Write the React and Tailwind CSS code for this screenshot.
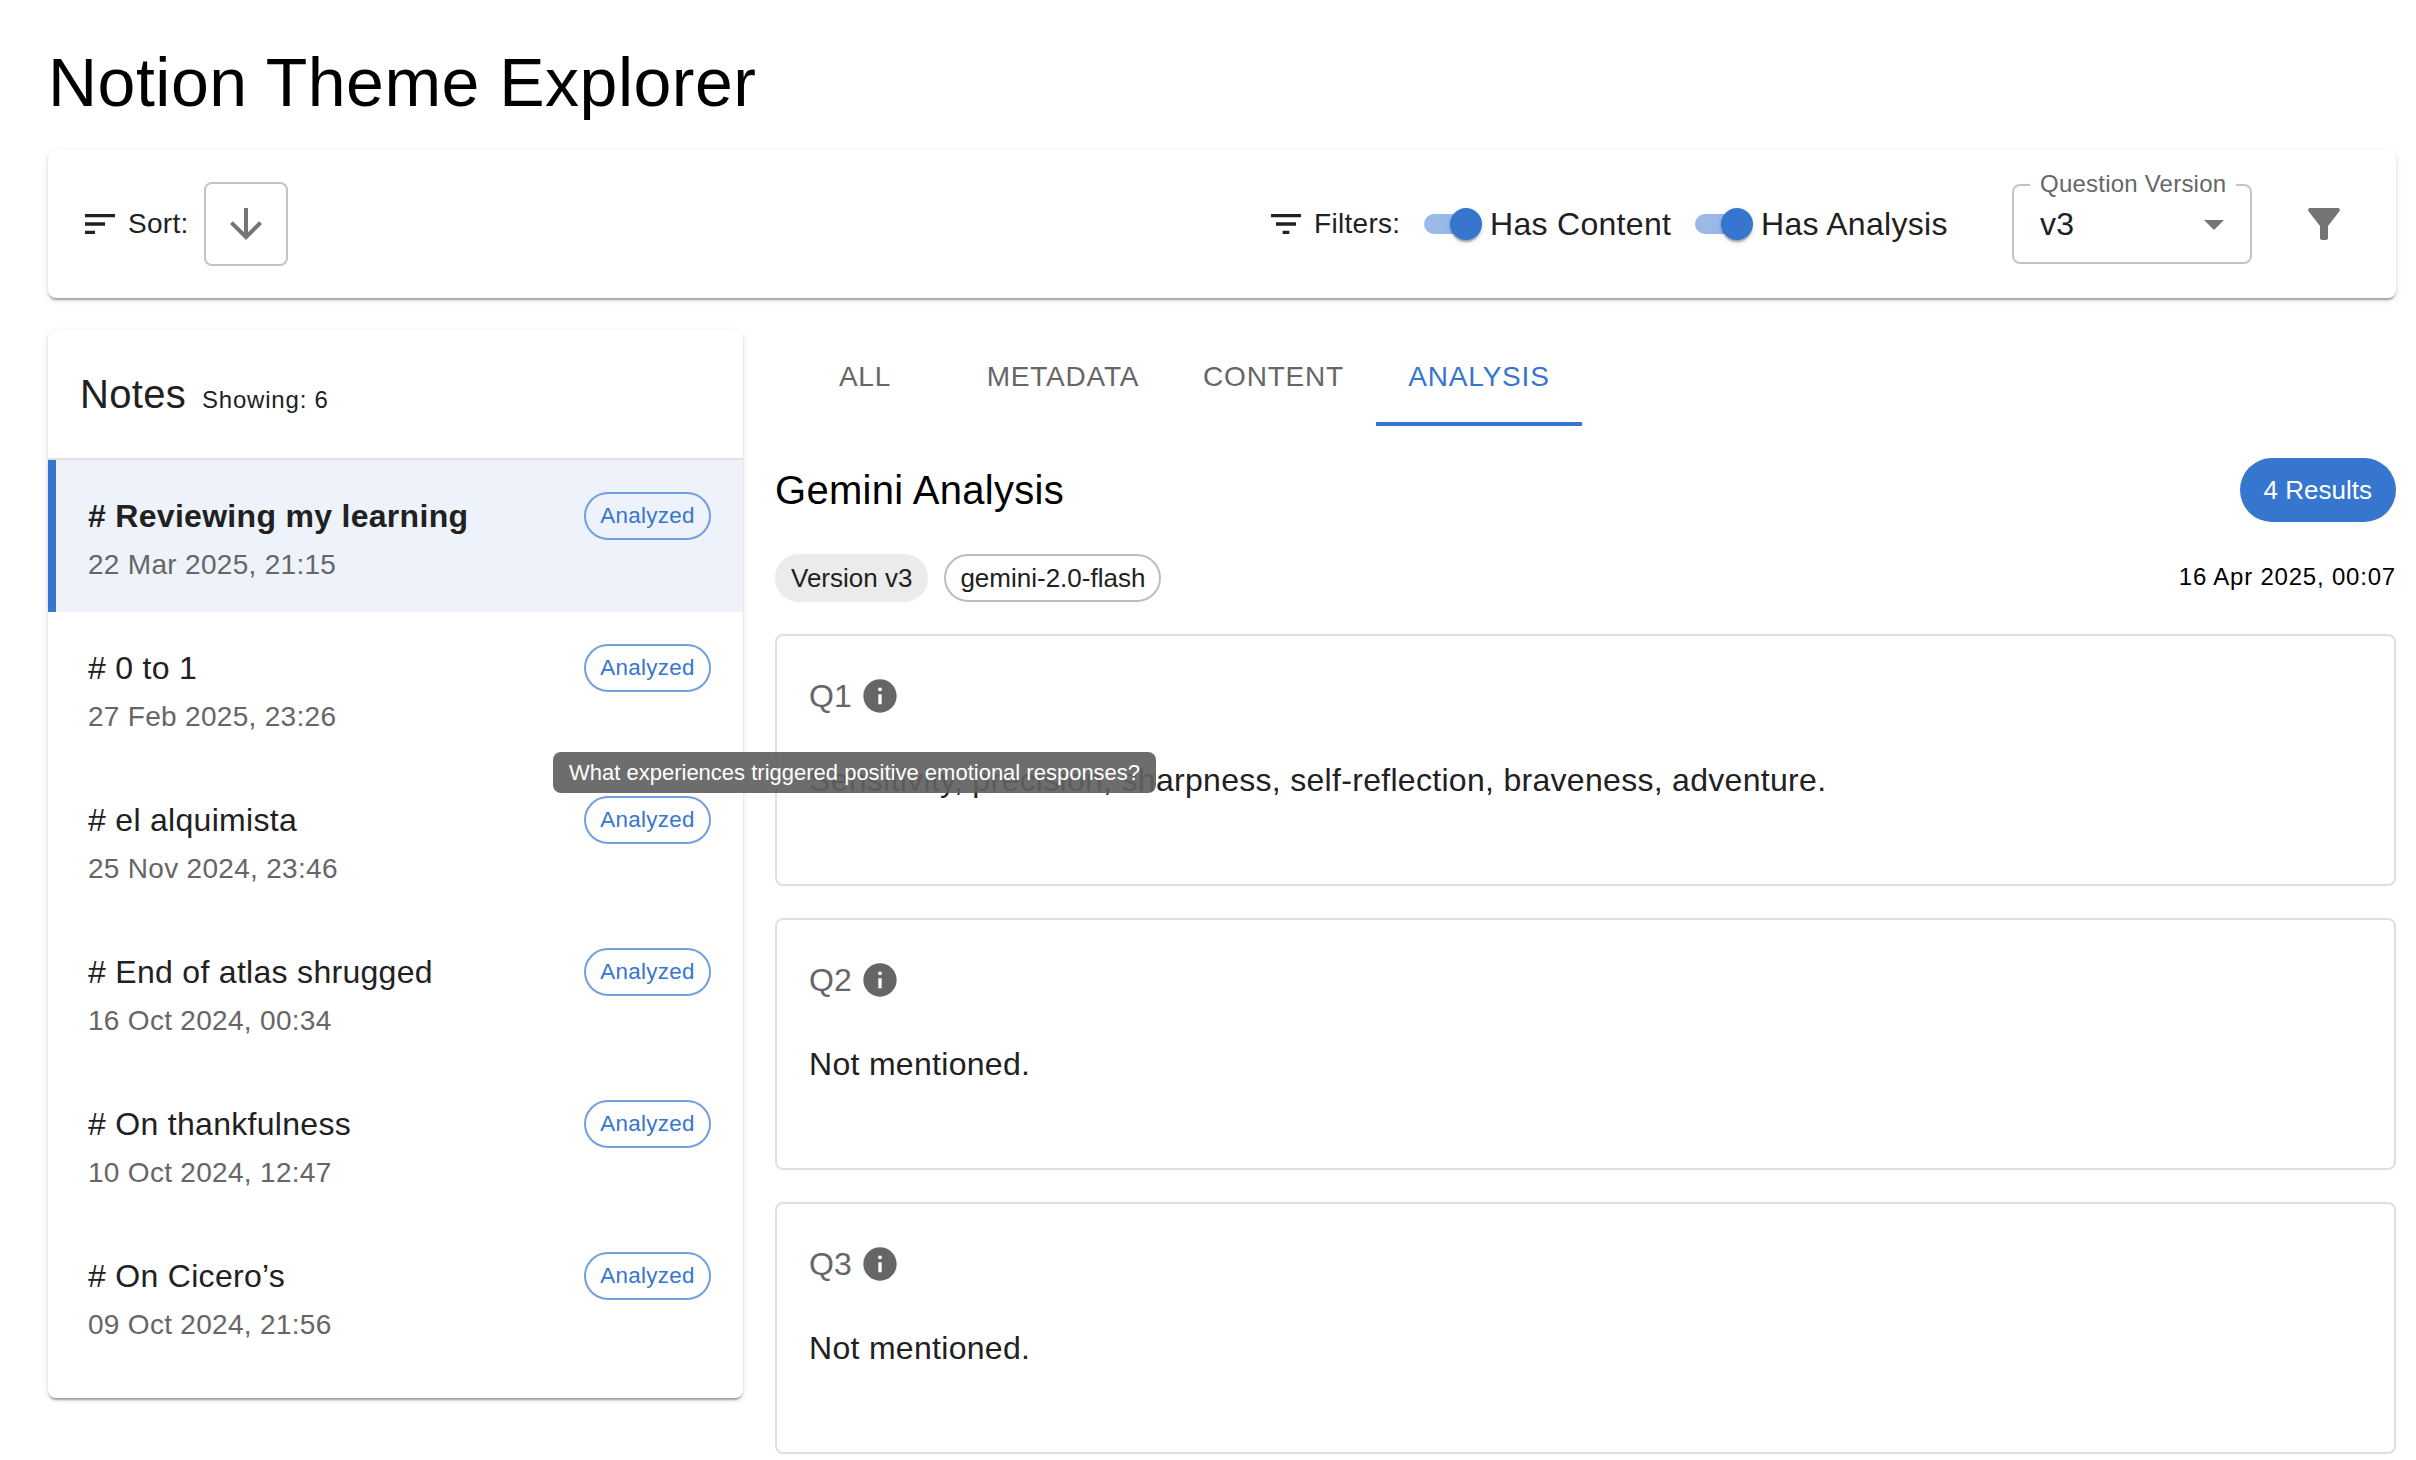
const ICONS = {
  sort: 'M3 18h6v-2H3v2zM3 6v2h18V6H3zm0 7h12v-2H3v2z',
  filterList: 'M10 18h4v-2h-4v2zM3 6v2h18V6H3zm3 7h12v-2H6v2z',
  arrowDown: 'm20 12-1.41-1.41L13 16.17V4h-2v12.17l-5.58-5.59L4 12l8 8 8-8z',
  dropDown: 'M7 10l5 5 5-5z',
  funnel:
    'M4.25 5.61C6.27 8.2 10 13 10 13v6c0 .55.45 1 1 1h2c.55 0 1-.45 1-1v-6s3.72-4.8 5.74-7.39c.51-.66.04-1.61-.79-1.61H5.04c-.83 0-1.3.95-.79 1.61z',
  info: 'M12 2C6.48 2 2 6.48 2 12s4.48 10 10 10 10-4.48 10-10S17.52 2 12 2zm1 15h-2v-6h2v6zm0-8h-2V7h2v2z',
};

function Icon({ name, className }) {
  return (
    <svg viewBox="0 0 24 24" fill="currentColor" className={`block shrink-0 ${className}`}>
      <path d={ICONS[name]} />
    </svg>
  );
}

const PAPER =
  'rounded-lg bg-white text-[#212121] shadow-[0_4px_2px_-2px_rgba(0,0,0,0.2),0_2px_2px_0_rgba(0,0,0,0.14),0_2px_6px_0_rgba(0,0,0,0.12)]';

function Toggle({ label, className }) {
  return (
    <label className={`flex items-center ${className}`}>
      <span className="flex h-5 w-[52px] shrink-0 items-center justify-end rounded-full bg-[#9bb9e6]">
        <span className="-mr-1.5 size-8 shrink-0 rounded-full bg-[#3676ce] shadow-[0_4px_2px_-2px_rgba(0,0,0,0.2),0_2px_2px_0_rgba(0,0,0,0.14),0_2px_6px_0_rgba(0,0,0,0.12)]" />
      </span>
      <span className="ml-[14px] text-[32px] leading-12 tracking-[0.3px] whitespace-nowrap">{label}</span>
    </label>
  );
}

function Toolbar() {
  return (
    <div className={`mt-[26px] flex h-37 items-center pr-12 pl-8 ${PAPER}`}>
      <Icon name="sort" className="size-10" />
      <span className="ml-2 text-[28px] leading-10 tracking-[0.3px]">Sort:</span>
      <button className="ml-[15px] flex size-[84px] items-center justify-center rounded-lg border-2 border-[#c4c4c4] text-[#757575]">
        <Icon name="arrowDown" className="size-12" />
      </button>
      <div className="ml-auto flex items-center">
        <Icon name="filterList" className="size-10" />
        <span className="ml-2 w-[86px] text-[28px] leading-10 tracking-[0.3px]">Filters:</span>
        <Toggle label="Has Content" className="ml-6 w-[271px]" />
        <Toggle label="Has Analysis" className="w-[317px]" />
        <div className="relative flex h-20 w-60 items-center justify-between rounded-lg border-2 border-[#c4c4c4] pr-3 pl-[26px]">
          <span className="absolute -top-4 left-4 bg-white px-2.5 text-[24px] leading-7 tracking-[0.22px] whitespace-nowrap text-[#666]">
            Question Version
          </span>
          <span className="text-[32px] leading-12 tracking-[0.3px]">v3</span>
          <Icon name="dropDown" className="size-12 text-[#757575]" />
        </div>
        <Icon name="funnel" className="ml-12 size-12 text-[#757575]" />
      </div>
    </div>
  );
}

const NOTES = [
  { title: '# Reviewing my learning', date: '22 Mar 2025, 21:15', selected: true },
  { title: '# 0 to 1', date: '27 Feb 2025, 23:26' },
  { title: '# el alquimista', date: '25 Nov 2024, 23:46' },
  { title: '# End of atlas shrugged', date: '16 Oct 2024, 00:34' },
  { title: '# On thankfulness', date: '10 Oct 2024, 12:47' },
  { title: '# On Cicero’s', date: '09 Oct 2024, 21:56' },
];

function NotesPanel() {
  return (
    <aside className={`h-[1068px] w-[695px] shrink-0 ${PAPER}`}>
      <header className="flex h-[130px] items-center border-b-2 border-[#e0e0e0] px-8">
        <div className="flex items-baseline">
          <h2 className="text-[40px] leading-16 tracking-[0.3px]">Notes</h2>
          <span className="ml-4 text-[24px] leading-10 tracking-[0.8px]">Showing: 6</span>
        </div>
      </header>
      <ul>
        {NOTES.map((note) => (
          <li
            key={note.title}
            className={`flex h-38 items-start justify-between border-l-8 pt-8 pr-8 pl-8 ${
              note.selected ? 'border-[#3676ce] bg-[#eef3fb]' : 'border-transparent'
            }`}
          >
            <div>
              <div className={`text-[32px] leading-12 tracking-[0.3px] ${note.selected ? 'font-bold' : ''}`}>
                {note.title}
              </div>
              <div className="mt-[5px] text-[28px] leading-10 tracking-[0.3px] text-[#666]">{note.date}</div>
            </div>
            <span className="flex h-12 w-[127px] items-center justify-center rounded-full border-2 border-[#729fdf] text-[22.4px] tracking-[0.3px] text-[#3676ce]">
              Analyzed
            </span>
          </li>
        ))}
      </ul>
    </aside>
  );
}

const TABS = [
  { label: 'ALL', className: 'w-[180px] text-[#666]' },
  { label: 'METADATA', className: 'w-[216px] text-[#666]' },
  { label: 'CONTENT', className: 'w-[205px] text-[#666]' },
  { label: 'ANALYSIS', className: 'w-[206px] text-[#3676ce]', active: true },
];

const ANSWERS = [
  {
    id: 'Q1',
    text: 'Sensitivity, precision, sharpness, self-reflection, braveness, adventure.',
    tooltip: 'What experiences triggered positive emotional responses?',
  },
  { id: 'Q2', text: 'Not mentioned.' },
  { id: 'Q3', text: 'Not mentioned.' },
];

function AnswerCard({ id, text, tooltip }) {
  return (
    <section className="h-[252px] rounded-lg border-2 border-[#e0e0e0] px-8 pt-9 text-[32px] leading-12 tracking-[0.3px]">
      <div className="flex items-center text-[#666]">
        <span className="w-[51px] tracking-[0px]">{id}</span>
        <span className="relative">
          <Icon name="info" className="size-10" />
          {tooltip && (
            <span className="absolute top-[76px] left-1/2 z-10 flex h-[41px] -translate-x-[327px] items-center rounded-lg bg-[rgba(97,97,97,0.92)] px-4 text-[22px] leading-[31px] tracking-[0px] whitespace-nowrap text-white">
              {tooltip}
            </span>
          )}
        </span>
      </div>
      <p className="mt-[36px] text-[#212121]">{text}</p>
    </section>
  );
}

function AnalysisPanel() {
  return (
    <main className="min-w-0 flex-1">
      <nav className="flex h-24 text-[28px] tracking-[0.8px]">
        {TABS.map((tab) => (
          <button
            key={tab.label}
            className={`flex items-center justify-center border-b-4 pt-0.5 ${tab.className} ${
              tab.active ? 'border-[#3676ce]' : 'border-transparent'
            }`}
          >
            {tab.label}
          </button>
        ))}
      </nav>
      <div className="mt-8 flex h-16 items-center justify-between">
        <h2 className="text-[40px] leading-16 tracking-[0.3px] text-black">Gemini Analysis</h2>
        <span className="flex h-16 items-center rounded-full bg-[#3676ce] px-6 text-[26px] text-white">4 Results</span>
      </div>
      <div className="mt-8 flex h-12 items-center text-[26px] text-[#212121]">
        <span className="flex h-12 items-center rounded-full bg-[#ebebeb] px-4">Version v3</span>
        <span className="ml-4 flex h-12 items-center rounded-full border-2 border-[#bdbdbd] px-3.5">gemini-2.0-flash</span>
        <span className="ml-auto pb-0.5 text-[24px] leading-10 tracking-[0.8px] text-black">16 Apr 2025, 00:07</span>
      </div>
      <div className="mt-8 flex flex-col gap-8">
        {ANSWERS.map((answer) => (
          <AnswerCard key={answer.id} {...answer} />
        ))}
      </div>
    </main>
  );
}

export default function App() {
  return (
    <div className="h-[1460px] w-[2416px] overflow-hidden bg-white pt-10 pr-5 pl-12 font-['Liberation_Sans',Arial,sans-serif]">
      <h1 className="text-[68px] leading-[84px] tracking-[0.5px] text-black">Notion Theme Explorer</h1>
      <Toolbar />
      <div className="mt-8 flex items-start gap-8">
        <NotesPanel />
        <AnalysisPanel />
      </div>
    </div>
  );
}
